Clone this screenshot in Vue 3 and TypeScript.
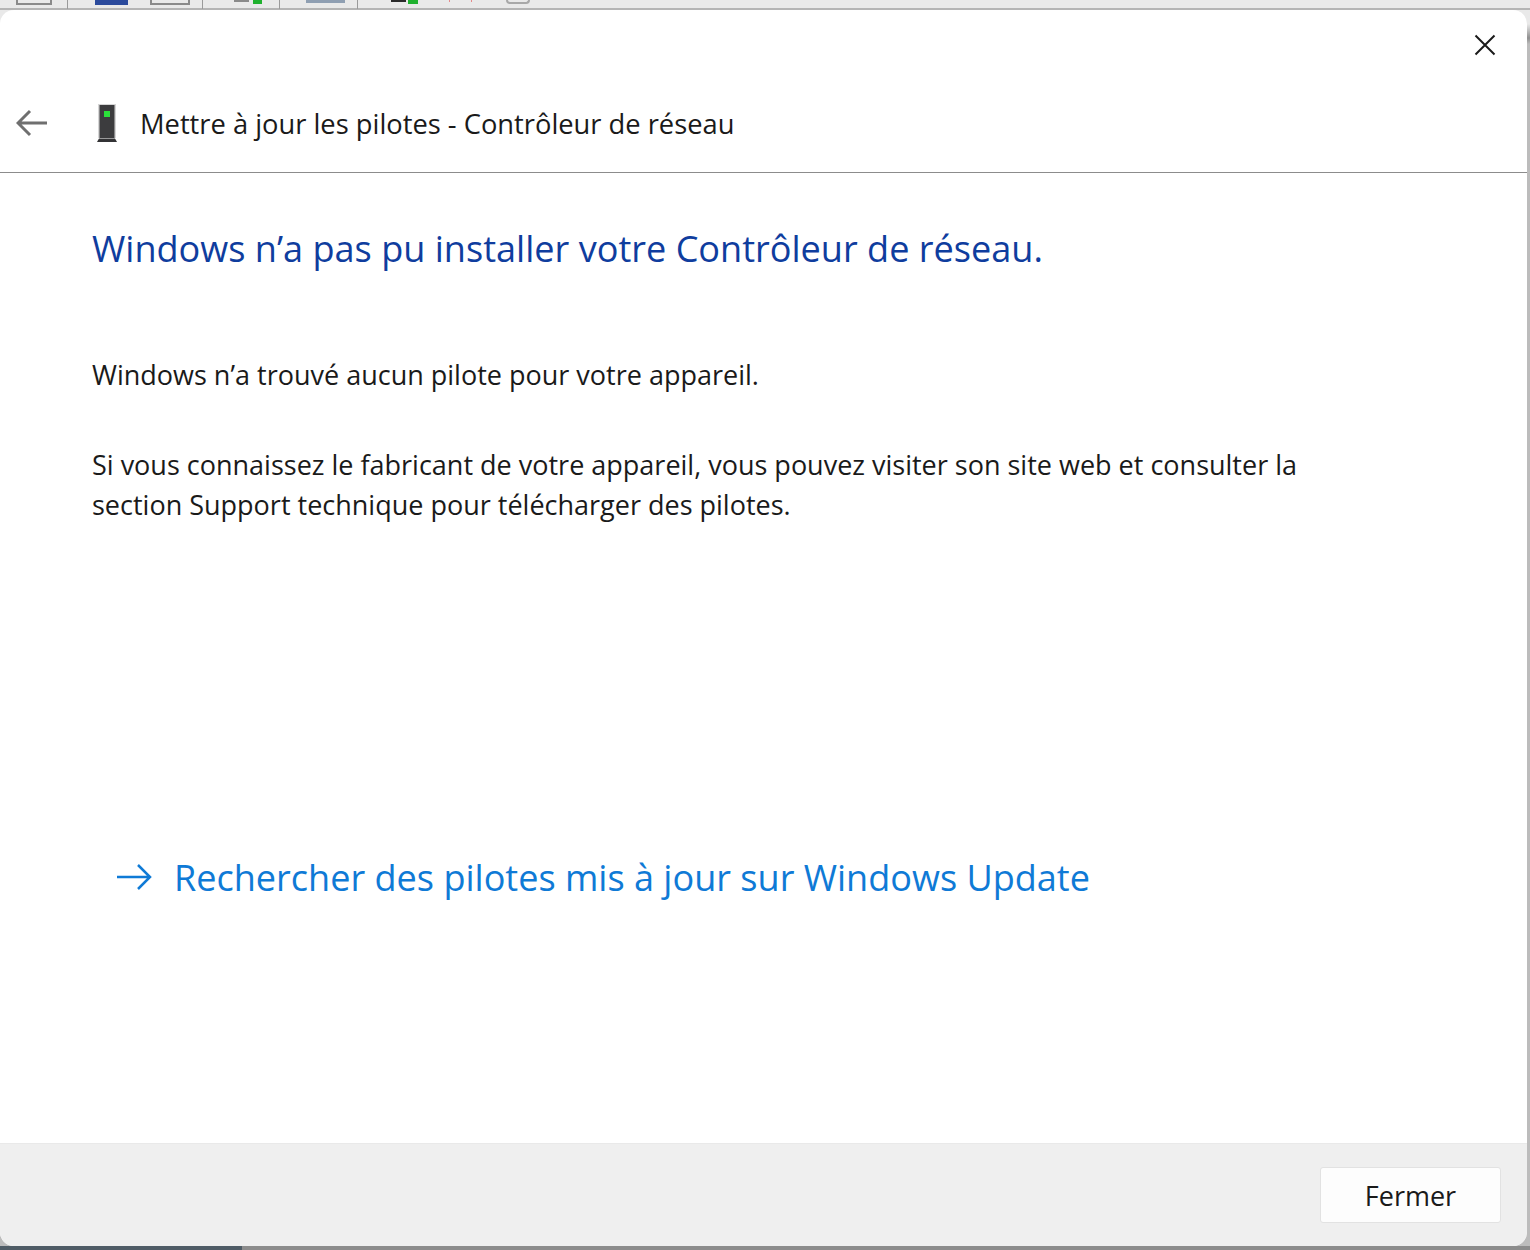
<script setup lang="ts">
// toolbar bits still visible above the dialog, by x position
const bits = [
  { x: 16, w: 36, h: 5, kind: 'box' },
  { x: 67, w: 1, h: 9, color: '#9a9a9a' },
  { x: 95, w: 33, h: 5, color: '#2b4a9c' },
  { x: 150, w: 40, h: 5, kind: 'box' },
  { x: 202, w: 1, h: 9, color: '#9a9a9a' },
  { x: 234, w: 15, h: 2, color: '#8a8a8a' },
  { x: 253, w: 9, h: 4, color: '#1fb12e' },
  { x: 279, w: 1, h: 9, color: '#9a9a9a' },
  { x: 306, w: 39, h: 3, color: '#8f9fb2' },
  { x: 357, w: 1, h: 9, color: '#9a9a9a' },
  { x: 391, w: 15, h: 2, color: '#2a2a2a' },
  { x: 408, w: 10, h: 4, color: '#1fb12e' },
  { x: 449, w: 1, h: 2, color: '#e58a8a' },
  { x: 471, w: 1, h: 2, color: '#e58a8a' },
  { x: 506, w: 24, h: 4, kind: 'ring' },
]

const placed = bits.map((b, i) => {
  const prev = bits[i - 1]
  return { ...b, gap: prev ? b.x - prev.x - prev.w : b.x }
})
</script>

<template>
  <div class="page">
    <div class="strip">
      <span
        v-for="b in placed"
        :key="b.x"
        class="bit"
        :class="b.kind"
        :style="{ width: b.w + 'px', height: b.h + 'px', background: b.color, marginLeft: b.gap + 'px' }"
      ></span>
    </div>

    <div class="dialog">
      <header class="head">
        <div class="close-row">
          <svg class="close" width="24" height="24" viewBox="0 0 24 24">
            <path d="M2.500 2.500 L21.500 21.500 M21.500 2.500 L2.500 21.500" fill="none" stroke="#1a1a1a" stroke-width="2" />
          </svg>
        </div>
        <div class="nav-row">
          <svg class="back" width="32" height="28" viewBox="0 0 32 28">
            <path d="M14 2 L2 14 L14 26 M2 14 H31" fill="none" stroke="#6f6f6f" stroke-width="3" />
          </svg>
          <svg class="device" width="20" height="38" viewBox="0 0 20 38">
            <rect x="1" y="0" width="18" height="34" fill="#d6d6d6" />
            <rect x="2.500" y="1" width="15" height="33" fill="#3c3c3e" />
            <rect x="7" y="7" width="6" height="6" fill="#2be03a" />
            <path d="M2 34.500 H18 L20 38 H0 Z" fill="#333335" />
          </svg>
          <span class="nav-title">Mettre à jour les pilotes - Contrôleur de réseau</span>
        </div>
      </header>

      <main class="body">
        <h1>Windows n’a pas pu installer votre Contrôleur de réseau.</h1>
        <p class="first">Windows n’a trouvé aucun pilote pour votre appareil.</p>
        <p class="second">Si vous connaissez le fabricant de votre appareil, vous pouvez visiter son site web et consulter la<br />section Support technique pour télécharger des pilotes.</p>
        <a class="link">
          <svg width="36" height="28" viewBox="0 0 36 28">
            <path d="M1 14 H34 M22 2 L34 14 L22 26" fill="none" stroke="#0f7ad6" stroke-width="2.500" />
          </svg>
          <span>Rechercher des pilotes mis à jour sur Windows Update</span>
        </a>
      </main>

      <footer class="foot">
        <button type="button">Fermer</button>
      </footer>
    </div>

    <div class="under"><span class="under-dark"></span></div>
  </div>
</template>

<style>
body {
  background: #e9e9e9;
}
</style>

<style scoped>
.page {
  width: 1530px;
  height: 1250px;
  overflow: hidden;
  display: flex;
  flex-direction: column;
  font-family: "Open Sans", "Noto Sans", sans-serif;
  background: linear-gradient(#e9e9e9 24px, #8f8f8f 38px, #bcbcbc 44px);
}

.strip {
  height: 8px;
  flex: none;
  display: flex;
  align-items: flex-start;
  background: #e9e9e9;
  border-bottom: 2px solid #b4b4b4;
}

.bit {
  display: block;
  flex: none;
  box-sizing: border-box;
}

.box {
  border: 2px solid #8a8a8a;
  border-top: 0;
}

.ring {
  border: 2px solid #a8a8a8;
  border-top: 0;
  border-radius: 0 0 12px 12px;
}

.dialog {
  width: 1527px;
  height: 1236px;
  flex: none;
  display: flex;
  flex-direction: column;
  background: #fff;
  border-radius: 14px;
  overflow: hidden;
}

.head {
  height: 163px;
  flex: none;
  box-sizing: border-box;
  border-bottom: 1px solid #8c8c8c;
}

.close-row {
  display: flex;
  justify-content: flex-end;
  padding: 23px 30px 0 0;
}

.nav-row {
  display: flex;
  align-items: center;
  margin-top: 47px;
  padding-left: 16px;
}

.device {
  margin-left: 49px;
}

.nav-title {
  margin-left: 23px;
  font-size: 27.300px;
  color: #1a1a1a;
}

.body {
  flex: 1;
  display: flex;
  flex-direction: column;
  padding-left: 92px;
  color: #1a1a1a;
}

h1 {
  margin: 49px 0 0;
  font-size: 36.100px;
  font-weight: 400;
  line-height: 52px;
  color: #0f3d9e;
}

p {
  margin: 0;
  font-size: 27px;
  line-height: 40px;
}

.first {
  margin-top: 81px;
}

.second {
  margin-top: 50px;
}

.link {
  display: flex;
  align-items: center;
  gap: 22px;
  margin: 326px 0 0 24px;
  font-size: 36.050px;
  line-height: 52px;
  color: #0f7ad6;
}

.foot {
  height: 103px;
  flex: none;
  box-sizing: border-box;
  display: flex;
  justify-content: flex-end;
  align-items: flex-start;
  padding: 23px 26px 0 0;
  background: #efefef;
  border-top: 1px solid #e9e9e9;
}

button {
  width: 181px;
  height: 56px;
  border: 1px solid #e2e2e2;
  border-radius: 3px;
  background: #fdfdfd;
  font: inherit;
  font-size: 27px;
  color: #1a1a1a;
}

.under {
  flex: 1;
  display: flex;
  background: #8c8c8c;
}

.under-dark {
  width: 242px;
  background: #4f5c66;
}
</style>
